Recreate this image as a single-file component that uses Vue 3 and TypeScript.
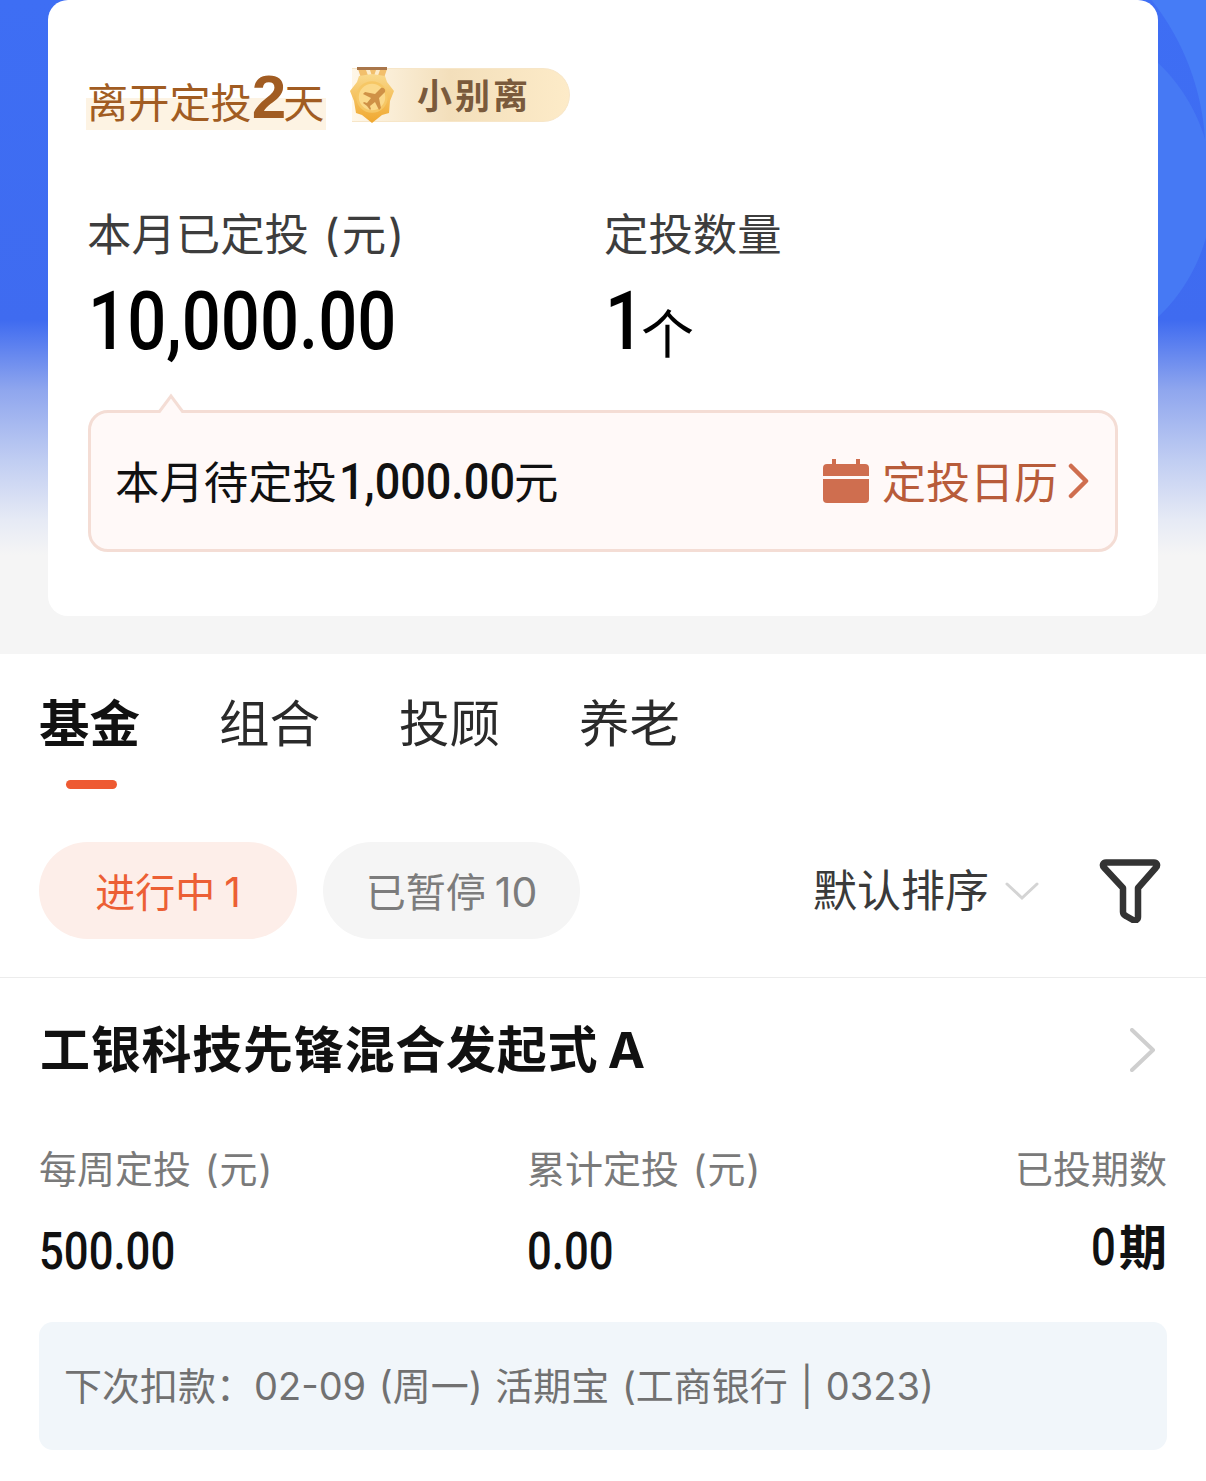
<script setup lang="ts">
const tabs = ["基金", "组合", "投顾", "养老"];
const stats = [
  { label: "每周定投", value: "500.00" },
  { label: "累计定投", value: "0.00" },
];
</script>

<template>
  <div class="page">
    <section class="hero">
      <div class="hero-card">
        <div class="title-row">
          <div class="title">
            <span class="title-mark"></span>
            <span class="title-text">离开定投<b>2</b>天</span>
          </div>
          <div class="badge">
            <svg class="medal" width="50" height="60" viewBox="0 0 50 60">
              <defs>
                <linearGradient id="medalFill" x1="0" y1="0" x2="0" y2="1">
                  <stop offset="0" stop-color="#f9d98c" />
                  <stop offset="1" stop-color="#f0a72e" />
                </linearGradient>
              </defs>
              <path d="M10 3h29l-6 18H16z" fill="#f2bf6c" />
              <path d="M18 4h4l3 9 3-9h4l-5 14h-4z" fill="#fdeccb" />
              <rect x="9" y="1" width="30" height="3" fill="#a9764a" />
              <path d="M24 8l13 2 2 6 7 9-4 10-1 12-7 2-10 8-10-8-6-2-2-12-4-10 7-9 2-6z" fill="url(#medalFill)" />
              <circle cx="24" cy="31" r="14.5" fill="#fbd98a" stroke="#f6c765" stroke-width="2.5" />
              <path d="M33 22l-6 6-10-2-2 2 8 4-4 5-3-1-1 1 4 3 3 4 1-1-1-3 5-4 4 8 2-2-2-10 6-6c1-3-2-5-4-4z" fill="#cf9146" />
            </svg>
            <span class="badge-text">小别离</span>
          </div>
        </div>

        <div class="summary">
          <div class="summary-col first">
            <div class="summary-label">本月已定投 <span class="paren">(元)</span></div>
            <div class="summary-value"><span class="big-num">10,000.00</span></div>
          </div>
          <div class="summary-col">
            <div class="summary-label">定投数量</div>
            <div class="summary-value"><span class="big-num one">1</span><span class="unit">个</span></div>
          </div>
        </div>

        <div class="pending">
          <svg class="pending-arrow" width="38" height="21" viewBox="0 0 38 21">
            <path d="M7 21L19 4l12 17z" fill="#fff9f8" />
            <path d="M0 19.5h7.5L19 4l11.5 15.5H38" fill="none" stroke="#f4ddd5" stroke-width="3" />
          </svg>
          <div class="pending-text">本月待定投<span class="pending-num">1,000.00</span>元</div>
          <div class="calendar-link">
            <svg width="46" height="44" viewBox="0 0 46 44">
              <path d="M9 0h4v5h20V0h4v5h5a4 4 0 0 1 4 4v8H0V9a4 4 0 0 1 4-4h5z" fill="#cf6e4f" />
              <path d="M0 20h46v20a4 4 0 0 1-4 4H4a4 4 0 0 1-4-4z" fill="#cf6e4f" />
            </svg>
            <span class="calendar-text">定投日历</span>
            <svg width="21" height="36" viewBox="0 0 21 36">
              <path d="M3 3l15 15L3 33" fill="none" stroke="#cf6e4f" stroke-width="4.5" stroke-linecap="round" stroke-linejoin="round" />
            </svg>
          </div>
        </div>
      </div>
    </section>

    <section class="list">
      <nav class="tabs">
        <div v-for="(tab, i) in tabs" :key="tab" class="tab" :class="{ active: i === 0 }">{{ tab }}</div>
      </nav>

      <div class="filters">
        <div class="pill on">进行中<span class="count">1</span></div>
        <div class="pill">已暂停<span class="count">10</span></div>
        <div class="sort">
          <span class="sort-text">默认排序</span>
          <svg width="34" height="20" viewBox="0 0 34 20">
            <path d="M2 3l15 14L32 3" fill="none" stroke="#d4d4d4" stroke-width="3" stroke-linecap="round" />
          </svg>
        </div>
        <svg class="funnel" width="62" height="64" viewBox="0 0 62 64">
          <path d="M7 3.5h48c3 0 4 3 2 5L39 29v29c0 3-3 4-5 3l-7-4c-2-1-3-2-3-4V29L5 8.500C3 6.500 4 3.500 7 3.500z" fill="none" stroke="#333" stroke-width="6.500" stroke-linejoin="round" />
        </svg>
      </div>

      <article class="fund">
        <header class="fund-head">
          <h2 class="fund-name">工银科技先锋混合发起式 A</h2>
          <svg width="26" height="44" viewBox="0 0 26 44">
            <path d="M2 2l21 20L2 42" fill="none" stroke="#cfcfcf" stroke-width="4" stroke-linecap="round" stroke-linejoin="round" />
          </svg>
        </header>

        <div class="fund-stats">
          <div v-for="s in stats" :key="s.label" class="stat">
            <div class="stat-label">{{ s.label }} <span class="stat-paren">(元)</span></div>
            <div class="stat-value"><span class="stat-num">{{ s.value }}</span></div>
          </div>
          <div class="stat last">
            <div class="stat-label">已投期数</div>
            <div class="stat-value period-value"><span class="stat-num zero">0</span><span class="period">期</span></div>
          </div>
        </div>

        <div class="next">下次扣款：02-09 (周一) 活期宝 (工商银行 | 0323)</div>
      </article>
    </section>
  </div>
</template>

<style>
html,
body {
  margin: 0;
  background: #fff;
}
</style>

<style scoped>
.page {
  width: 1206px;
  height: 1481px;
  overflow: hidden;
  background: #fff;
  font-family: Inter, "Noto Sans CJK SC", "Noto Sans", sans-serif;
  color: #000;
}

.hero {
  height: 654px;
  box-sizing: border-box;
  padding: 0 48px;
  background:
    radial-gradient(circle 176px at 1037px 190px, #4679f4 175px, rgba(70, 121, 244, 0) 176px),
    radial-gradient(circle 250px at -190px 155px, rgba(70, 125, 245, 0) 249px, #467cf6 250px) 100% 0 / 60px 150px no-repeat,
    linear-gradient(180deg, #3e6ef4 0, #3f6bf0 320px, #8fa6ee 390px, #c0cdf2 460px, #e6eaf5 520px, #f5f5f5 555px);
}

.hero-card {
  height: 616px;
  box-sizing: border-box;
  padding: 64px 40px 0 40px;
  background: #fff;
  border-radius: 20px;
}

.title-row {
  display: flex;
  align-items: flex-start;
  height: 66px;
}

.title {
  position: relative;
  width: 238px;
  height: 66px;
}

.title-mark {
  position: absolute;
  left: -2px;
  top: 34px;
  width: 240px;
  height: 32px;
  background: #fdf3e3;
}

.title-text {
  position: absolute;
  left: -1px;
  top: 1px;
  color: #a15c22;
  font-size: 41.200px;
  line-height: 76px;
  white-space: nowrap;
}

.title-text b {
  font-family: "Liberation Sans", sans-serif;
  font-size: 62px;
  line-height: 60px;
  letter-spacing: -3px;
}

.badge {
  position: relative;
  margin: 4px 0 0 26px;
  width: 218px;
  height: 54px;
  display: flex;
  align-items: center;
  box-sizing: border-box;
  padding-left: 65px;
  border-radius: 0 27px 27px 0;
  background: linear-gradient(90deg, #fff7e8 0, #f3dfbb 45%, #fdebc8 100%);
  border: 1px solid #f7e6c8;
  border-left: 0;
}

.medal {
  position: absolute;
  left: -4px;
  top: -3px;
}

.badge-text {
  margin-top: -3px;
  color: #7a5a3c;
  font-size: 35px;
  font-weight: 700;
  letter-spacing: 3px;
}

.summary {
  display: flex;
  margin-top: 74px;
}

.summary-col.first {
  width: 517px;
}

.summary-label {
  margin-left: -1px;
  color: #3d3d3d;
  font-size: 44.400px;
  line-height: 62px;
  white-space: nowrap;
  word-spacing: 2px;
}

.paren {
  letter-spacing: 2px;
}

.summary-value {
  margin-top: 16px;
  height: 80px;
  color: #000;
  line-height: 80px;
  white-space: nowrap;
}

.big-num {
  display: inline-block;
  font-family: Roboto, sans-serif;
  font-weight: 500;
  font-size: 81px;
  transform: scaleX(0.85);
  transform-origin: left center;
}

.big-num.one {
  width: 38px;
}

.unit {
  margin-left: -2px;
  font-size: 53px;
  vertical-align: -5px;
}

.pending {
  position: relative;
  margin-top: 48px;
  height: 142px;
  box-sizing: border-box;
  display: flex;
  align-items: center;
  justify-content: space-between;
  padding: 0 26px 0 24px;
  background: #fff9f8;
  border: 3px solid #f4ddd5;
  border-radius: 20px;
}

.pending-arrow {
  position: absolute;
  left: 61px;
  top: -21px;
}

.pending-text {
  margin-top: -4px;
  font-size: 44.400px;
  color: #111;
  white-space: nowrap;
}

.pending-num {
  display: inline-block;
  margin-left: 2px;
  width: 175px;
  font-family: Roboto, sans-serif;
  font-weight: 500;
  font-size: 50px;
  transform: scaleX(0.9);
  transform-origin: left center;
}

.calendar-link {
  display: flex;
  align-items: center;
}

.calendar-text {
  margin: -2px 10px 0 13px;
  color: #b85c3a;
  font-size: 44px;
}

.tabs {
  display: flex;
  padding: 35px 0 0 39px;
  height: 132px;
  box-sizing: border-box;
}

.tab {
  position: relative;
  width: 180px;
  font-size: 50.500px;
  line-height: 70px;
  color: #2a2a2a;
}

.tab.active {
  font-weight: 700;
  color: #111;
}

.tab.active::after {
  content: "";
  position: absolute;
  left: 27px;
  top: 91px;
  width: 51px;
  height: 9px;
  border-radius: 5px;
  background: #ee5a32;
}

.filters {
  display: flex;
  align-items: center;
  margin-top: 56px;
  padding: 0 45px 38px 39px;
  border-bottom: 1px solid #ececec;
}

.pill {
  width: 258px;
  height: 97px;
  margin-right: 26px;
  border-radius: 49px;
  background: #f5f5f5;
  color: #7c7c7c;
  font-size: 40px;
  line-height: 100px;
  text-align: center;
}

.pill + .pill {
  width: 257px;
}

.pill.on {
  background: #fdeee9;
  color: #ec5f35;
}

.count {
  margin-left: 9px;
  font-size: 41px;
}

.sort {
  display: flex;
  align-items: center;
  gap: 16px;
  margin-left: auto;
  color: #3a3a3a;
  font-size: 44px;
}

.sort-text {
  margin-top: -6px;
}

.funnel {
  margin-left: 60px;
}

.fund {
  padding: 0 39px;
}

.fund-head {
  display: flex;
  align-items: center;
  justify-content: space-between;
  height: 144px;
  padding-right: 11px;
}

.fund-name {
  margin: -8px 0 0 1px;
  font-size: 50px;
  font-weight: 700;
  letter-spacing: 0.750px;
  word-spacing: -3px;
  color: #111;
}

.fund-stats {
  display: flex;
  margin-top: 22px;
}

.stat {
  width: 489px;
}

.stat.last {
  flex: 1;
  text-align: right;
}

.stat-label {
  color: #7a7a7a;
  font-size: 38px;
  line-height: 50px;
  white-space: nowrap;
  word-spacing: 3px;
}

.stat-paren {
  letter-spacing: 1px;
}

.stat-value {
  margin-top: 28px;
  line-height: 60px;
  color: #111;
  white-space: nowrap;
}

.stat-num {
  display: inline-block;
  font-family: Roboto, sans-serif;
  font-weight: 500;
  font-size: 52px;
  transform: scaleX(0.84);
  transform-origin: left center;
}

.stat-num.zero {
  width: 25px;
}

.period-value {
  margin-top: 24px;
}

.period {
  margin-left: 3px;
  font-weight: 700;
  font-size: 48px;
}

.next {
  margin-top: 29px;
  height: 128px;
  box-sizing: border-box;
  padding-left: 25px;
  background: #f1f6fa;
  border-radius: 14px;
  color: #717171;
  font-size: 38px;
  line-height: 128px;
  white-space: nowrap;
  word-spacing: 2px;
}
</style>
